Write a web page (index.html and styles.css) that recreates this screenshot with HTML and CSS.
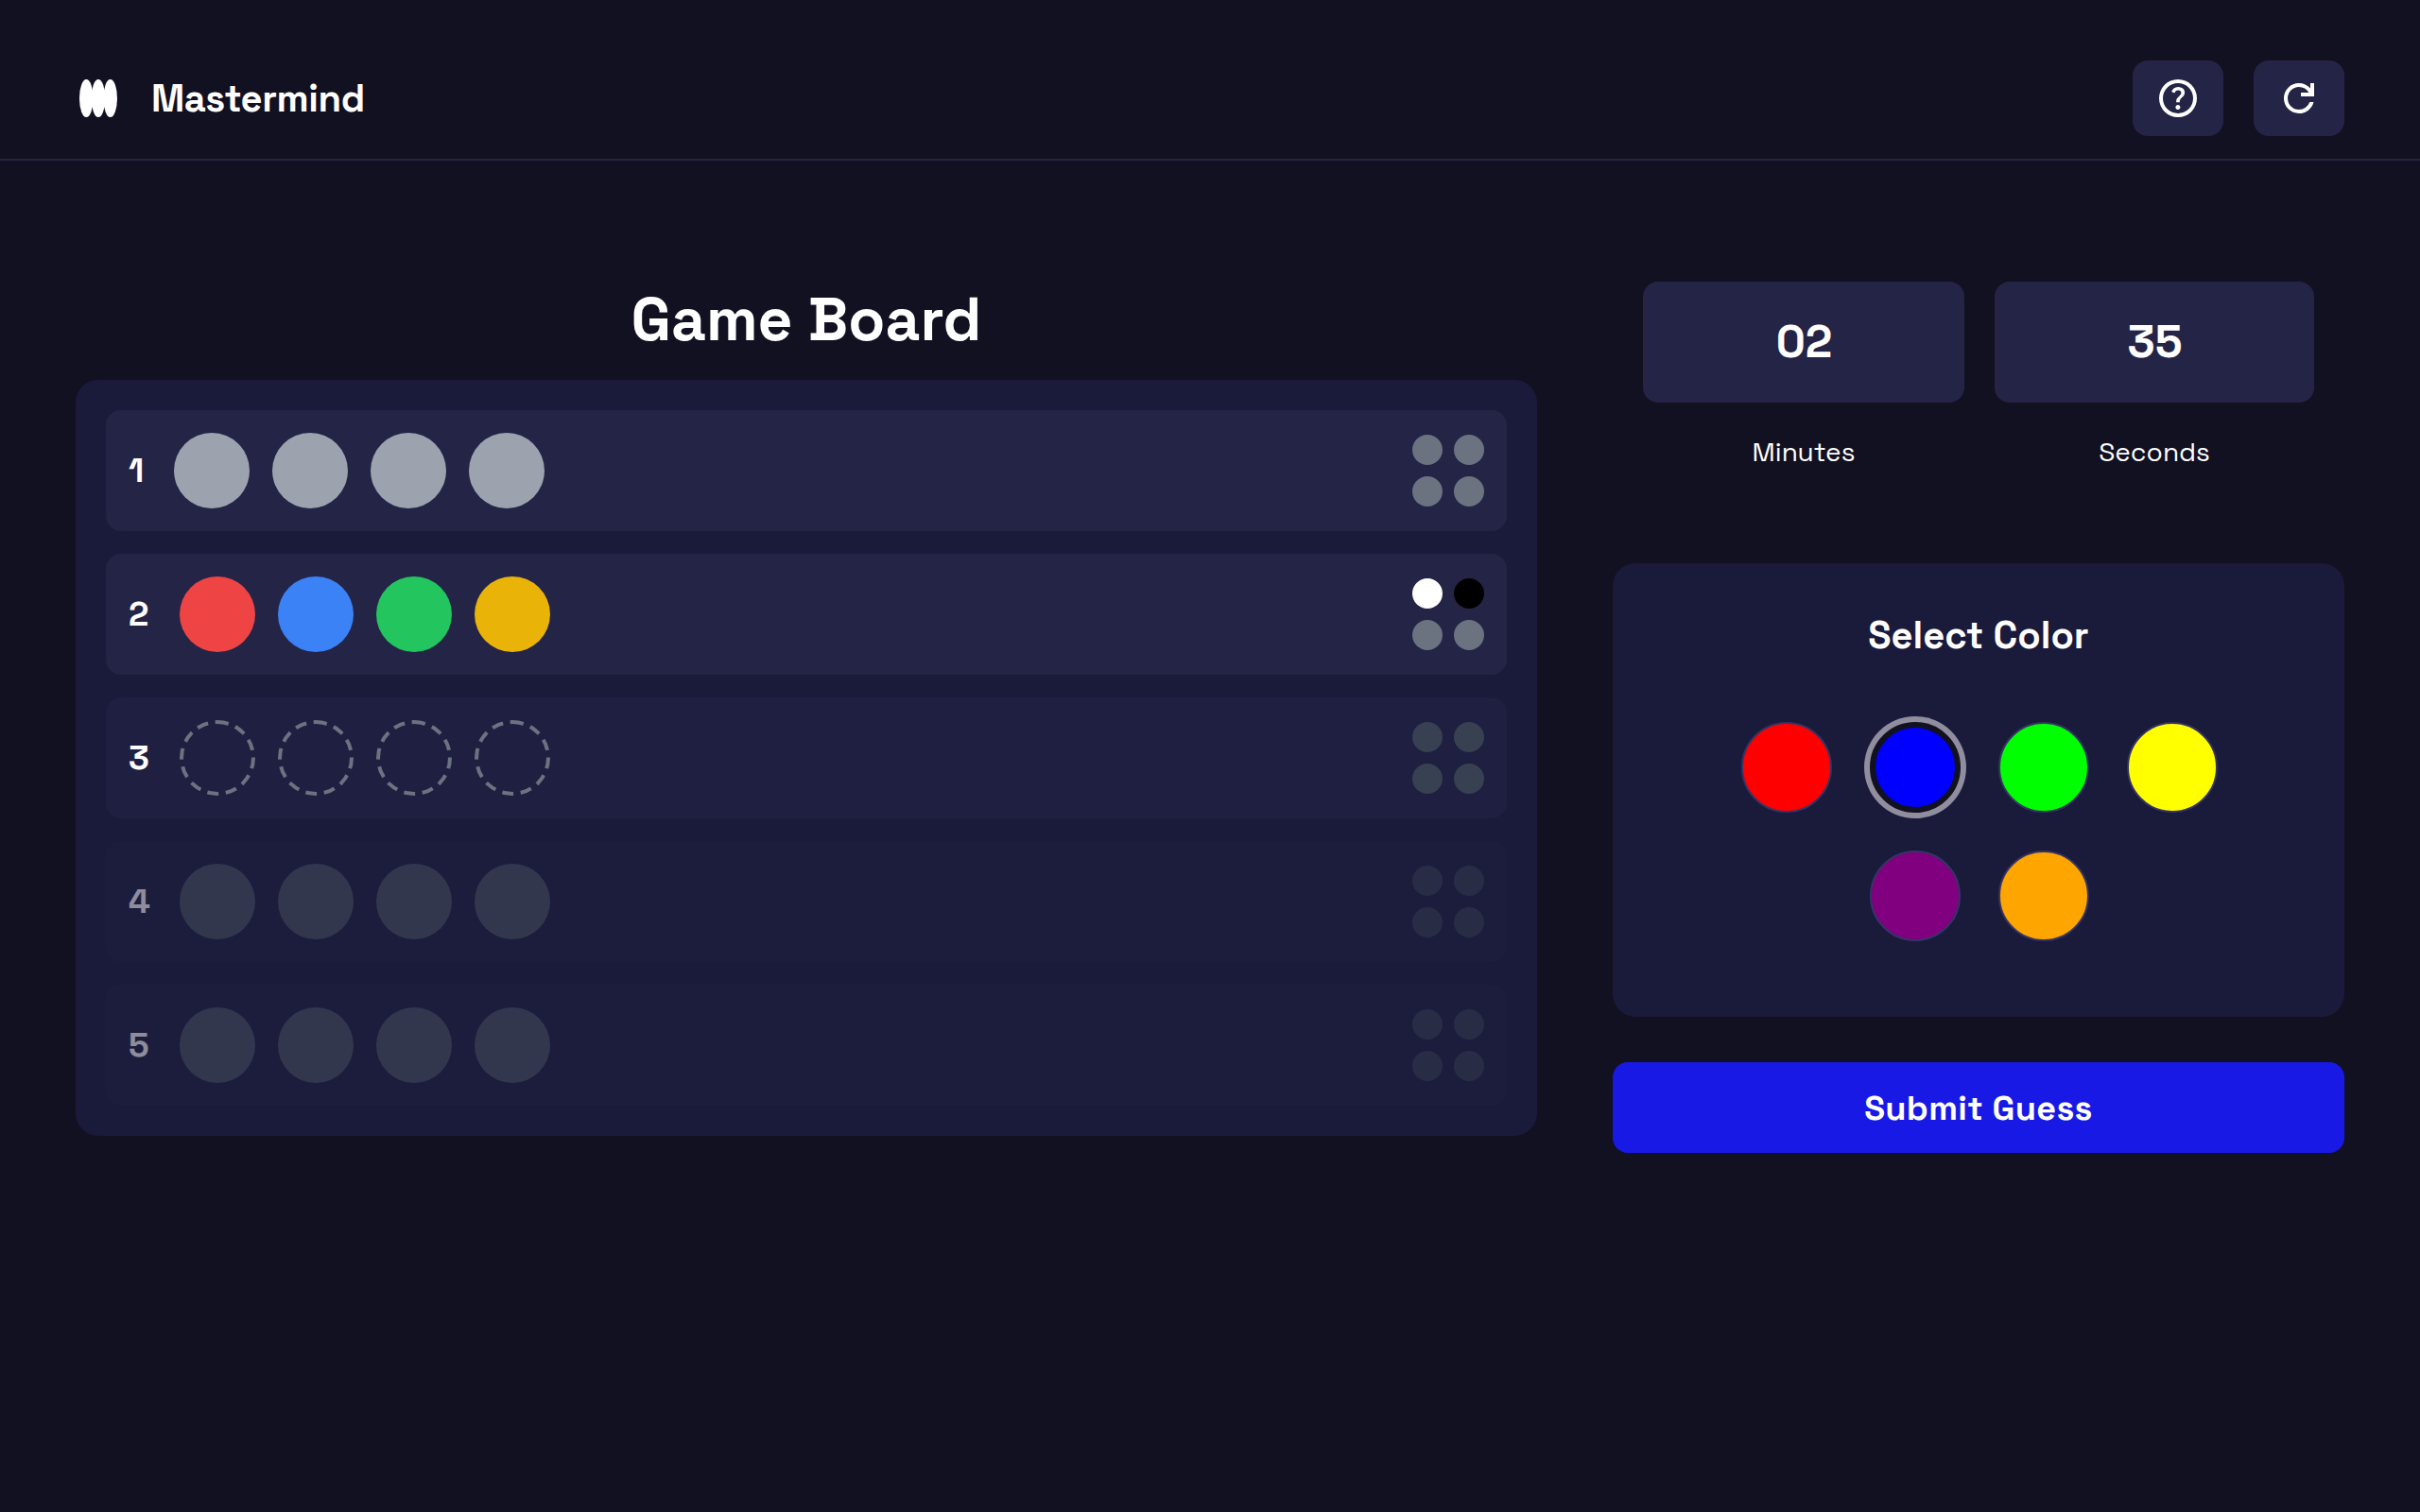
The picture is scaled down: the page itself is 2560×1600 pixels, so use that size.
FILE: index.html
```html
<!DOCTYPE html>
<html lang="en">
<head>
<meta charset="utf-8">
<title>Mastermind</title>
<link rel="stylesheet" href="styles.css">
</head>
<body>
<header class="header">
  <div class="brand">
    <svg class="logo" viewBox="0 0 48 48" fill="currentColor"><ellipse cx="11.3" cy="24" rx="7.3" ry="20"/><ellipse cx="24" cy="24" rx="7.3" ry="20"/><ellipse cx="36.7" cy="24" rx="7.3" ry="20"/></svg>
    <h1 class="brand-name">Mastermind</h1>
  </div>
  <div class="actions">
    <button class="icon-button" aria-label="Help"><svg viewBox="0 -960 960 960" fill="currentColor"><path d="M478-240q21 0 35.5-14.5T528-290q0-21-14.5-35.5T478-340q-21 0-35.5 14.5T428-290q0 21 14.5 35.5T478-240Zm-36-154h74q0-33 7.5-52t42.5-52q26-26 41-49.5t15-56.5q0-56-41-86t-97-30q-57 0-92.5 30T342-618l66 26q5-18 22.5-39t53.5-21q32 0 48 17.5t16 38.5q0 20-12 37.5T506-526q-44 39-54 59t-10 73Zm38 314q-83 0-156-31.5T197-197q-54-54-85.5-127T80-480q0-83 31.5-156T197-763q54-54 127-85.5T480-880q83 0 156 31.5T763-763q54 54 85.5 127T880-480q0 83-31.5 156T763-197q-54 54-127 85.5T480-80Zm0-80q134 0 227-93t93-227q0-134-93-227t-227-93q-134 0-227 93t-93 227q0 134 93 227t227 93Z"/></svg></button>
    <button class="icon-button" aria-label="Restart"><svg viewBox="0 -960 960 960" fill="currentColor"><path d="M480-160q-134 0-227-93t-93-227q0-134 93-227t227-93q69 0 132 28.5T720-690v-110h80v280H520v-80h168q-32-56-87.5-88T480-720q-100 0-170 70t-70 170q0 100 70 170t170 70q77 0 139-44t87-116h84q-28 106-114 173t-196 67Z"/></svg></button>
  </div>
</header>
<main class="main">
  <section class="game">
    <h2 class="game-title">Game Board</h2>
    <div class="board">
      <div class="row">
        <span class="number number-one">1</span>
        <div class="guess"><i class="dot empty"></i><i class="dot empty"></i><i class="dot empty"></i><i class="dot empty"></i></div>
        <div class="pegs"><i></i><i></i><i></i><i></i></div>
      </div>
      <div class="row">
        <span class="number">2</span>
        <div class="guess"><i class="dot red"></i><i class="dot blue"></i><i class="dot green"></i><i class="dot yellow"></i></div>
        <div class="pegs"><i class="white"></i><i class="black"></i><i></i><i></i></div>
      </div>
      <div class="row current">
        <span class="number">3</span>
        <div class="guess"><i class="dot open"></i><i class="dot open"></i><i class="dot open"></i><i class="dot open"></i></div>
        <div class="pegs"><i></i><i></i><i></i><i></i></div>
      </div>
      <div class="row future">
        <span class="number">4</span>
        <div class="guess"><i class="dot"></i><i class="dot"></i><i class="dot"></i><i class="dot"></i></div>
        <div class="pegs"><i></i><i></i><i></i><i></i></div>
      </div>
      <div class="row future">
        <span class="number">5</span>
        <div class="guess"><i class="dot"></i><i class="dot"></i><i class="dot"></i><i class="dot"></i></div>
        <div class="pegs"><i></i><i></i><i></i><i></i></div>
      </div>
    </div>
  </section>
  <aside class="side">
    <div class="timer">
      <div class="unit"><div class="value">02</div><div class="label">Minutes</div></div>
      <div class="unit"><div class="value">35</div><div class="label">Seconds</div></div>
    </div>
    <div class="picker">
      <h3 class="picker-title">Select Color</h3>
      <div class="swatches">
        <i class="swatch pick-red"></i><i class="swatch pick-blue selected"></i><i class="swatch pick-green"></i><i class="swatch pick-yellow"></i><i class="swatch pick-purple"></i><i class="swatch pick-orange"></i>
      </div>
    </div>
    <button class="submit">Submit Guess</button>
  </aside>
</main>
</body>
</html>
```
FILE: styles.css
```css
* { box-sizing: border-box; }
body {
  margin: 0;
  min-height: 1600px;
  background: #121121;
  color: #fff;
  font-family: "Space Grotesk", Inter, "Noto Sans", sans-serif;
}
h1, h2, h3 { margin: 0; font-weight: 700; }
button { border: 0; padding: 0; color: inherit; font: inherit; }
i { display: block; }

.header {
  height: 170px;
  padding: 64px 80px 24px;
  border-bottom: 2px solid #242447;
  display: flex;
  justify-content: space-between;
}
.brand { display: flex; align-items: center; gap: 32px; height: 80px; }
.logo { width: 48px; height: 48px; }
.brand-name { padding-top: 2px; font-size: 40px; line-height: 50px; letter-spacing: -0.45px; }
.actions { display: flex; gap: 32px; }
.icon-button {
  width: 96px;
  height: 80px;
  border-radius: 16px;
  background: #242447;
  display: flex;
  align-items: center;
  justify-content: center;
}
.icon-button svg { width: 48px; height: 48px; }

.main {
  padding: 128px 80px 0;
  display: grid;
  grid-template-columns: 1546px 774px;
  gap: 80px;
  align-items: start;
}
.game-title {
  height: 104px;
  line-height: 80px;
  font-size: 64px;
  text-align: center;
}
.board {
  padding: 32px;
  border-radius: 24px;
  background: #1a1a3a;
  display: flex;
  flex-direction: column;
  gap: 24px;
}
.row {
  height: 128px;
  padding: 24px;
  border-radius: 16px;
  background: #242447;
  display: flex;
  align-items: center;
}
.number { width: 54px; font-size: 36px; line-height: 56px; font-weight: 700; }
.number-one { width: 48px; }
.guess { display: flex; gap: 24px; }
.dot { width: 80px; height: 80px; border-radius: 50%; background: #4b5563; }
.empty { background: #9ca3af; }
.red { background: #ef4444; }
.blue { background: #3b82f6; }
.green { background: #22c55e; }
.yellow { background: #eab308; }
/* drawn at half size and scaled up, which gives longer dashes */
.open { background: none; }
.open::before {
  content: "";
  display: block;
  box-sizing: border-box;
  width: 40px;
  height: 40px;
  border: 2px dashed #6b7280;
  border-radius: 50%;
  transform: scale(2);
  transform-origin: 0 0;
}
.pegs {
  margin-left: auto;
  display: grid;
  grid-template-columns: 32px 32px;
  gap: 12px;
}
.pegs i { height: 32px; border-radius: 50%; background: #6b7280; }
.pegs .white { background: #fff; }
.pegs .black { background: #000; }
.current { background: rgba(36, 36, 71, 0.5); }
.current .pegs i { background: #374151; }
.future { background: rgba(36, 36, 71, 0.5); opacity: 0.5; }
.future .pegs i { background: #374151; }

.timer { height: 298px; padding: 0 32px; display: grid; grid-template-columns: 340px 338px; gap: 32px; }
.unit { display: flex; flex-direction: column; gap: 32px; }
.value {
  height: 128px;
  padding-left: 1px;
  border-radius: 16px;
  background: #242447;
  font-size: 48px;
  line-height: 128px;
  font-weight: 700;
  text-align: center;
}
.label { font-size: 28px; line-height: 40px; text-align: center; }
.picker { height: 480px; padding: 49px 48px 47px; border-radius: 24px; background: #1a1a3a; }
.picker-title { font-size: 40px; line-height: 56px; text-align: center; }
.swatches {
  padding: 63px 86px 0 88px;
  display: flex;
  flex-wrap: wrap;
  justify-content: center;
  gap: 40px;
}
.swatch { width: 96px; height: 96px; border-radius: 50%; border: 2px solid #343465; }
.selected { border: 6px solid #121121; box-shadow: 0 0 0 6px #8f8d9e; }
.pick-red { background: #f00; }
.pick-blue { background: #00f; }
.pick-green { background: #0f0; }
.pick-yellow { background: #ff0; }
.pick-purple { background: #800080; }
.pick-orange { background: #ffa500; }
.submit {
  width: 100%;
  height: 96px;
  margin-top: 48px;
  padding-top: 2px;
  border-radius: 16px;
  background: #1919e6;
  font-size: 36px;
  line-height: 56px;
  font-weight: 700;
  letter-spacing: 0.36px;
}
```
